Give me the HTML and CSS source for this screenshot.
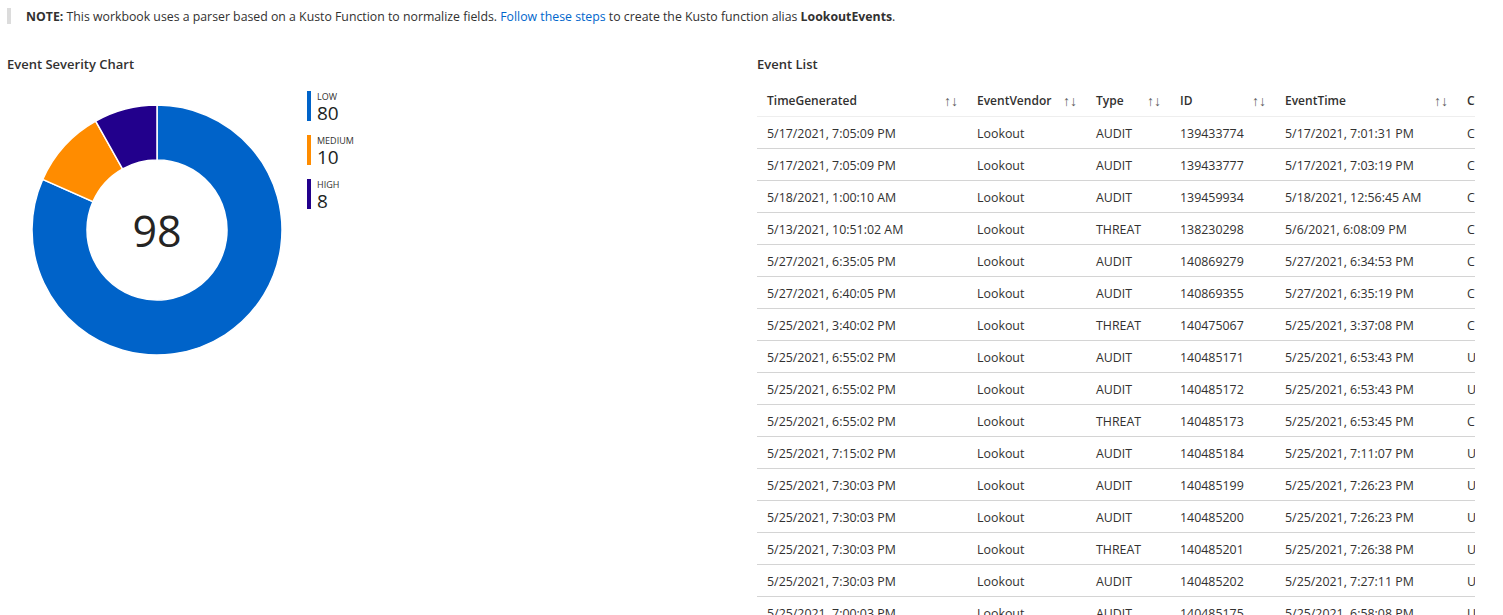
FILE: index.html
```html
<!DOCTYPE html>
<html>
<head>
<meta charset="utf-8">
<link rel="stylesheet" href="styles.css">
</head>
<body>
<div class="note">
  <span class="note-text"><b>NOTE:</b> This workbook uses a parser based on a Kusto Function to normalize fields. <a class="link" href="#">Follow these steps</a> to create the Kusto function alias <b>LookoutEvents</b>.</span>
</div>
<div class="panels">
  <section class="panel-left">
    <h2 class="title">Event Severity Chart</h2>
    <div class="chart">
      <div class="donut">
        <svg width="252" height="252" viewBox="0 0 252 252">
          <path class="seg low" d="M126,1 A125,125 0 1 1 11.7,75.4 L62.0,97.66 A70,70 0 1 0 126,56 Z"/>
          <path class="seg med" d="M11.7,75.4 A125,125 0 0 1 64.65,17.09 L91.64,65.01 A70,70 0 0 0 62.0,97.66 Z"/>
          <path class="seg high" d="M64.65,17.09 A125,125 0 0 1 126,1 L126,56 A70,70 0 0 0 91.64,65.01 Z"/>
        </svg>
        <div class="total">98</div>
      </div>
      <ul class="legend">
        <li class="legend-item"><span class="swatch sw-low"></span><div class="lg-text"><div class="lg-label">LOW</div><div class="lg-value">80</div></div></li>
        <li class="legend-item"><span class="swatch sw-med"></span><div class="lg-text"><div class="lg-label">MEDIUM</div><div class="lg-value">10</div></div></li>
        <li class="legend-item"><span class="swatch sw-high"></span><div class="lg-text"><div class="lg-label">HIGH</div><div class="lg-value">8</div></div></li>
      </ul>
    </div>
  </section>
  <section class="panel-right">
    <h2 class="title">Event List</h2>
    <div class="table-wrap">
      <table class="grid">
        <colgroup>
          <col class="c1"><col class="c2"><col class="c3"><col class="c4"><col class="c5"><col class="c6">
        </colgroup>
        <thead>
          <tr>
            <th><div class="th-in"><span>TimeGenerated</span><span class="sort">↑↓</span></div></th>
            <th><div class="th-in"><span>EventVendor</span><span class="sort">↑↓</span></div></th>
            <th><div class="th-in"><span>Type</span><span class="sort">↑↓</span></div></th>
            <th><div class="th-in"><span>ID</span><span class="sort">↑↓</span></div></th>
            <th><div class="th-in"><span>EventTime</span><span class="sort">↑↓</span></div></th>
            <th><div class="th-in"><span>Classification</span></div></th>
          </tr>
        </thead>
        <tbody>
          <tr><td>5/17/2021, 7:05:09 PM</td><td>Lookout</td><td>AUDIT</td><td>139433774</td><td>5/17/2021, 7:01:31 PM</td><td>Cloud</td></tr>
          <tr><td>5/17/2021, 7:05:09 PM</td><td>Lookout</td><td>AUDIT</td><td>139433777</td><td>5/17/2021, 7:03:19 PM</td><td>Cloud</td></tr>
          <tr><td>5/18/2021, 1:00:10 AM</td><td>Lookout</td><td>AUDIT</td><td>139459934</td><td>5/18/2021, 12:56:45 AM</td><td>Cloud</td></tr>
          <tr><td>5/13/2021, 10:51:02 AM</td><td>Lookout</td><td>THREAT</td><td>138230298</td><td>5/6/2021, 6:08:09 PM</td><td>Cloud</td></tr>
          <tr><td>5/27/2021, 6:35:05 PM</td><td>Lookout</td><td>AUDIT</td><td>140869279</td><td>5/27/2021, 6:34:53 PM</td><td>Cloud</td></tr>
          <tr><td>5/27/2021, 6:40:05 PM</td><td>Lookout</td><td>AUDIT</td><td>140869355</td><td>5/27/2021, 6:35:19 PM</td><td>Cloud</td></tr>
          <tr><td>5/25/2021, 3:40:02 PM</td><td>Lookout</td><td>THREAT</td><td>140475067</td><td>5/25/2021, 3:37:08 PM</td><td>Cloud</td></tr>
          <tr><td>5/25/2021, 6:55:02 PM</td><td>Lookout</td><td>AUDIT</td><td>140485171</td><td>5/25/2021, 6:53:43 PM</td><td>Update</td></tr>
          <tr><td>5/25/2021, 6:55:02 PM</td><td>Lookout</td><td>AUDIT</td><td>140485172</td><td>5/25/2021, 6:53:43 PM</td><td>Update</td></tr>
          <tr><td>5/25/2021, 6:55:02 PM</td><td>Lookout</td><td>THREAT</td><td>140485173</td><td>5/25/2021, 6:53:45 PM</td><td>Cloud</td></tr>
          <tr><td>5/25/2021, 7:15:02 PM</td><td>Lookout</td><td>AUDIT</td><td>140485184</td><td>5/25/2021, 7:11:07 PM</td><td>Update</td></tr>
          <tr><td>5/25/2021, 7:30:03 PM</td><td>Lookout</td><td>AUDIT</td><td>140485199</td><td>5/25/2021, 7:26:23 PM</td><td>Update</td></tr>
          <tr><td>5/25/2021, 7:30:03 PM</td><td>Lookout</td><td>AUDIT</td><td>140485200</td><td>5/25/2021, 7:26:23 PM</td><td>Update</td></tr>
          <tr><td>5/25/2021, 7:30:03 PM</td><td>Lookout</td><td>THREAT</td><td>140485201</td><td>5/25/2021, 7:26:38 PM</td><td>Update</td></tr>
          <tr><td>5/25/2021, 7:30:03 PM</td><td>Lookout</td><td>AUDIT</td><td>140485202</td><td>5/25/2021, 7:27:11 PM</td><td>Update</td></tr>
          <tr><td>5/25/2021, 7:00:03 PM</td><td>Lookout</td><td>AUDIT</td><td>140485175</td><td>5/25/2021, 6:58:08 PM</td><td>Update</td></tr>
        </tbody>
      </table>
    </div>
  </section>
</div>
</body>
</html>
```

FILE: styles.css
```css
html, body {
  margin: 0;
  padding: 0;
  background: #ffffff;
  overflow: hidden;
}
body {
  font-family: "Open Sans", "Noto Sans", sans-serif;
  color: #323130;
  font-size: 12px;
  height: 615px;
}
.note {
  margin: 8px 0 0 7px;
  border-left: 4px solid #dcdcdc;
  height: 16px;
  display: flex;
  align-items: center;
  padding-left: 15px;
}
.note-text {
  font-size: 12.3px;
  white-space: nowrap;
}
.note-text b { font-weight: 700; }
.link { color: #0066cc; text-decoration: none; }
.panels {
  display: flex;
  margin-top: 31px;
}
.title {
  margin: 0;
  font-size: 13px;
  font-weight: 600;
  line-height: 18px;
  color: #323130;
}
.panel-left {
  width: 750px;
  padding-left: 7px;
  box-sizing: border-box;
}
.chart {
  display: flex;
  align-items: flex-start;
  margin-top: 31px;
  padding-left: 24px;
}
.donut {
  position: relative;
  width: 252px;
  height: 252px;
}
.donut svg { display: block; }
.seg { stroke: #ffffff; stroke-width: 1.5; }
.low { fill: #0063c9; }
.med { fill: #ff8c00; }
.high { fill: #22008c; }
.total {
  position: absolute;
  inset: 0;
  display: flex;
  align-items: center;
  justify-content: center;
  font-size: 43px;
  color: #252423;
}
.legend {
  list-style: none;
  margin: -13px 0 0 24px;
  padding: 0;
  display: flex;
  flex-direction: column;
  gap: 14px;
}
.legend-item {
  display: flex;
  gap: 6px;
  height: 30px;
}
.swatch { width: 4px; height: 30px; }
.sw-low { background: #0063c9; }
.sw-med { background: #ff8c00; }
.sw-high { background: #22008c; }
.lg-text { display: flex; flex-direction: column; gap: 1px; }
.lg-label { font-size: 9px; line-height: 12px; color: #323130; }
.lg-value { font-size: 19px; line-height: 19px; font-weight: 500; color: #201f1e; }
.panel-right {
  padding-left: 7px;
}
.table-wrap {
  margin-top: 11px;
  width: 718px;
  overflow: hidden;
}
.grid {
  border-collapse: collapse;
  table-layout: fixed;
  width: 900px;
}
.c1 { width: 210px; }
.c2 { width: 119px; }
.c3 { width: 84px; }
.c4 { width: 105px; }
.c5 { width: 182px; }
.c6 { width: 200px; }
.grid th, .grid td {
  text-align: left;
  white-space: nowrap;
  overflow: hidden;
}
.grid th {
  font-weight: 600;
  font-size: 12px;
  height: 32px;
  padding: 0 9px 0 10px;
  border-bottom: 1px solid #eeeeee;
}
.grid td {
  font-size: 12.4px;
  height: 32px;
  padding: 1px 9px 0 10px;
  box-sizing: border-box;
  border-bottom: 1px solid #d4d4d4;
}
.th-in {
  display: flex;
  justify-content: space-between;
  align-items: center;
}
.sort {
  color: #605e5c;
  font-weight: 400;
  font-size: 14px;
  letter-spacing: 0;
}
```
